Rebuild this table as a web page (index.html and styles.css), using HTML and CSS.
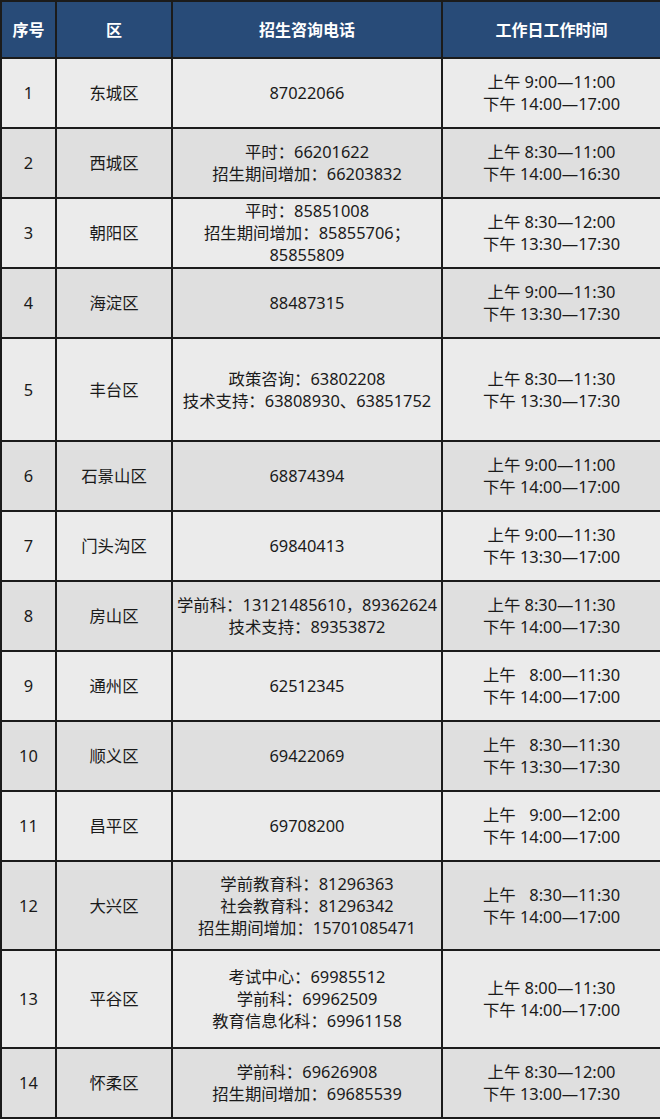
FILE: index.html
```html
<!DOCTYPE html>
<html lang="zh-CN">
<head>
<meta charset="utf-8">
<title>招生咨询电话</title>
<link rel="stylesheet" href="styles.css">
</head>
<body>
<table class="tbl">
  <colgroup>
    <col class="c1"><col class="c2"><col class="c3"><col class="c4">
  </colgroup>
  <thead>
    <tr class="head"><th>序号</th><th>区</th><th>招生咨询电话</th><th>工作日工作时间</th></tr>
  </thead>
  <tbody>
    <tr class="r70 odd"><td>1</td><td>东城区</td><td>87022066</td><td>上午 9:00—11:00<br>下午 14:00—17:00</td></tr>
    <tr class="r70 even"><td>2</td><td>西城区</td><td>平时：66201622<br>招生期间增加：66203832</td><td>上午 8:30—11:00<br>下午 14:00—16:30</td></tr>
    <tr class="r70 odd"><td>3</td><td>朝阳区</td><td>平时：85851008<br>招生期间增加：85855706；<br>85855809</td><td>上午 8:30—12:00<br>下午 13:30—17:30</td></tr>
    <tr class="r70 even"><td>4</td><td>海淀区</td><td>88487315</td><td>上午 9:00—11:30<br>下午 13:30—17:30</td></tr>
    <tr class="r103 odd"><td>5</td><td>丰台区</td><td>政策咨询：63802208<br>技术支持：63808930、63851752</td><td>上午 8:30—11:30<br>下午 13:30—17:30</td></tr>
    <tr class="r70 even"><td>6</td><td>石景山区</td><td>68874394</td><td>上午 9:00—11:00<br>下午 14:00—17:00</td></tr>
    <tr class="r70 odd"><td>7</td><td>门头沟区</td><td>69840413</td><td>上午 9:00—11:30<br>下午 13:30—17:00</td></tr>
    <tr class="r70 even"><td>8</td><td>房山区</td><td>学前科：13121485610，89362624<br>技术支持：89353872</td><td>上午 8:30—11:30<br>下午 14:00—17:30</td></tr>
    <tr class="r70 odd"><td>9</td><td>通州区</td><td>62512345</td><td class="pre">上午&#8199; 8:00—11:30<br>下午 14:00—17:00</td></tr>
    <tr class="r70 even"><td>10</td><td>顺义区</td><td>69422069</td><td class="pre">上午&#8199; 8:30—11:30<br>下午 13:30—17:30</td></tr>
    <tr class="r70 odd"><td>11</td><td>昌平区</td><td>69708200</td><td class="pre">上午&#8199; 9:00—12:00<br>下午 14:00—17:00</td></tr>
    <tr class="r89 even"><td>12</td><td>大兴区</td><td>学前教育科：81296363<br>社会教育科：81296342<br>招生期间增加：15701085471</td><td class="pre">上午&#8199; 8:30—11:30<br>下午 14:00—17:00</td></tr>
    <tr class="r98 odd"><td>13</td><td>平谷区</td><td>考试中心：69985512<br>学前科：69962509<br>教育信息化科：69961158</td><td>上午 8:00—11:30<br>下午 14:00—17:00</td></tr>
    <tr class="r70 even"><td>14</td><td>怀柔区</td><td>学前科：69626908<br>招生期间增加：69685539</td><td>上午 8:30—12:00<br>下午 13:00—17:30</td></tr>
  </tbody>
</table>
</body>
</html>
```

FILE: styles.css
```css
html, body {
  margin: 0;
  padding: 0;
  background: #ffffff;
}
body {
  width: 660px;
  height: 1120px;
  overflow: hidden;
  font-family: "Noto Sans", "Noto Sans CJK SC", sans-serif;
  font-size: 16.4px;
  color: #1a1a1a;
}
.tbl {
  width: 660px;
  table-layout: fixed;
  border-collapse: collapse;
  border: 2px solid #1b1b1b;
}
.c1 { width: 55px; }
.c2 { width: 116px; }
.c3 { width: 270px; }
.c4 { width: 219px; }
.tbl th, .tbl td {
  border: 2px solid #1b1b1b;
  text-align: center;
  vertical-align: middle;
  padding: 0;
  line-height: 22px;
}
.head th {
  height: 55px;
  background: #284b78;
  color: #ffffff;
  font-weight: 700;
  font-size: 16px;
}
.odd td { background: #ebebeb; }
.even td { background: #dfdfdf; }
.r70 td { height: 68px; }
.r103 td { height: 101px; }
.r89 td { height: 87px; }
.r98 td { height: 96px; }
.pre { white-space: pre; }
```
